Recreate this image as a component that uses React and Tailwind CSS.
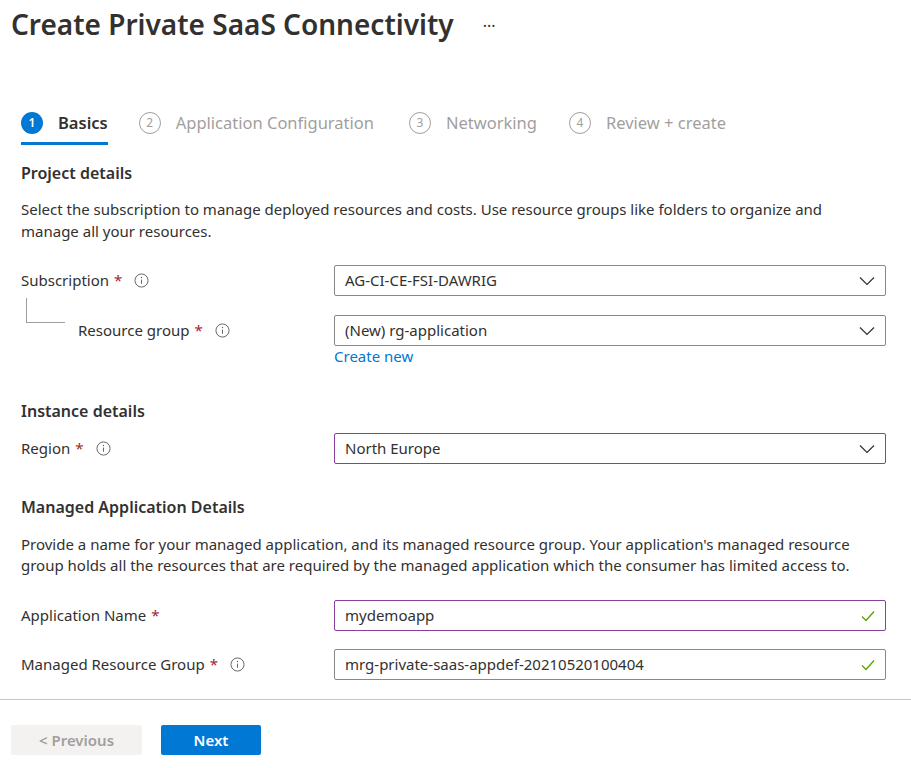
import React from "react";

const Info = () => (
  <svg width="15" height="15" viewBox="0 0 16 16" className="shrink-0">
    <circle cx="8" cy="8" r="7" fill="none" stroke="#605e5c" strokeWidth="1" />
    <line x1="8" y1="7" x2="8" y2="11.5" stroke="#605e5c" strokeWidth="1" />
    <circle cx="8" cy="4.8" r="0.7" fill="#605e5c" />
  </svg>
);

const Chevron = () => (
  <svg width="16" height="10" viewBox="0 0 16 10" className="shrink-0">
    <path d="M1 1.5 L8 8.5 L15 1.5" fill="none" stroke="#323130" strokeWidth="1.2" />
  </svg>
);

const Check = () => (
  <svg width="14" height="12" viewBox="0 0 14 12" className="shrink-0">
    <path d="M1 6.5 L5 10.5 L13 1.5" fill="none" stroke="#57a300" strokeWidth="1.3" />
  </svg>
);

const Req = () => <span className="text-[#a4262c] ml-[5px]">*</span>;

const Field = ({ value, purple, icon }) => (
  <div
    className={`w-[552px] h-[31px] rounded-[2px] border flex items-center justify-between pl-[10px] pr-[10px] text-[15px] text-[#323130] ${
      purple ? "border-[#8c3f9f]" : "border-[#8a8886]"
    }`}
  >
    <span>{value}</span>
    {icon === "chevron" ? <Chevron /> : <Check />}
  </div>
);

const Step = ({ n, label, active }) => (
  <div className="flex flex-col">
    <div className="flex items-center h-[38px]">
      {active ? (
        <span className="w-[22px] h-[22px] rounded-full bg-[#0078d4] text-white text-[12px] font-semibold flex items-center justify-center">
          {n}
        </span>
      ) : (
        <span className="w-[22px] h-[22px] rounded-full border border-[#a19f9d] text-[#a19f9d] text-[12px] flex items-center justify-center">
          {n}
        </span>
      )}
      <span
        className={`ml-[15px] text-[16.5px] ${
          active ? "text-[#323130] font-semibold" : "text-[#a19f9d]"
        }`}
      >
        {label}
      </span>
    </div>
    <div className={`h-[3px] ${active ? "bg-[#0078d4]" : "bg-transparent"}`} />
  </div>
);

export default function App() {
  return (
    <div
      className="w-[911px] h-[768px] bg-white overflow-hidden text-[#323130]"
      style={{ fontFamily: '"Segoe UI", "Noto Sans", "Open Sans", sans-serif' }}
    >
      <div className="h-[48px] flex items-center pl-[11px]">
        <h1 className="text-[28px] font-semibold text-[#323130] leading-[36px]">
          Create Private SaaS Connectivity
        </h1>
        <span className="ml-[29px] mt-[4px] text-[16px] text-[#323130]">···</span>
      </div>

      <div className="mt-[56px] pl-[21px] flex gap-[31px]">
        <Step n="1" label="Basics" active />
        <Step n="2" label="Application Configuration" />
        <div className="ml-[4px]"><Step n="3" label="Networking" /></div>
        <div className="ml-[1px]"><Step n="4" label="Review + create" /></div>
      </div>

      <div className="px-[21px]">
        <h2 className="mt-[16px] text-[16px] font-semibold leading-[24px]">Project details</h2>
        <p className="mt-[13px] text-[15px] leading-[22px] w-[860px]">
          Select the subscription to manage deployed resources and costs. Use resource groups like folders to organize and manage all your resources.
        </p>

        <div className="mt-[23px] flex items-center">
          <div className="w-[313px] flex items-center text-[15px]">
            <span>Subscription</span>
            <Req />
            <span className="ml-[12px] flex"><Info /></span>
          </div>
          <Field value="AG-CI-CE-FSI-DAWRIG" icon="chevron" />
        </div>

        <div className="mt-[19px] flex items-center">
          <div className="w-[313px] flex items-center text-[15px] relative">
            <div className="absolute left-[5px] -top-[21px] w-[39px] h-[25px] border-l border-b border-[#a19f9d]" />
            <span className="ml-[57px]">Resource group</span>
            <Req />
            <span className="ml-[12px] flex"><Info /></span>
          </div>
          <Field value="(New) rg-application" icon="chevron" />
        </div>
        <div className="ml-[313px] mt-0 text-[15px] leading-[20px] text-[#0078d4]">Create new</div>

        <h2 className="mt-[33px] text-[16px] font-semibold leading-[24px]">Instance details</h2>
        <div className="mt-[10px] flex items-center">
          <div className="w-[313px] flex items-center text-[15px]">
            <span>Region</span>
            <Req />
            <span className="ml-[12px] flex"><Info /></span>
          </div>
          <Field value="North Europe" icon="chevron" purple />
        </div>

        <h2 className="mt-[31px] text-[16px] font-semibold leading-[24px]">Managed Application Details</h2>
        <p className="mt-[15px] text-[15px] leading-[21px] w-[865px]">
          Provide a name for your managed application, and its managed resource group. Your application's managed resource group holds all the resources that are required by the managed application which the consumer has limited access to.
        </p>

        <div className="mt-[24px] flex items-center">
          <div className="w-[313px] flex items-center text-[15px]">
            <span>Application Name</span>
            <Req />
          </div>
          <Field value="mydemoapp" icon="check" purple />
        </div>

        <div className="mt-[18px] flex items-center">
          <div className="w-[313px] flex items-center text-[15px]">
            <span>Managed Resource Group</span>
            <Req />
            <span className="ml-[12px] flex"><Info /></span>
          </div>
          <Field value="mrg-private-saas-appdef-20210520100404" icon="check" />
        </div>
      </div>

      <div className="mt-[19px] h-px bg-[#c8c6c4]" />

      <div className="mt-[25px] pl-[11px] flex gap-[19px]">
        <button className="w-[131px] h-[30px] rounded-[2px] bg-[#f3f2f1] text-[#a19f9d] text-[15px] font-semibold">
          &lt; Previous
        </button>
        <button className="w-[100px] h-[30px] rounded-[2px] bg-[#0078d4] text-white text-[15px] font-semibold">
          Next
        </button>
      </div>
    </div>
  );
}
